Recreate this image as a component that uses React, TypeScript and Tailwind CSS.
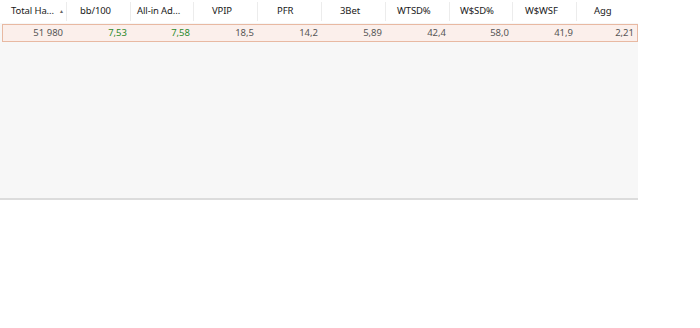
const columns = [
  { title: "Total Ha...", width: "w-[67px]", pad: "pl-[11px]", value: "51 980", sort: true },
  { title: "bb/100", width: "w-[64px]", pad: "pl-[13px]", value: "7,53", green: true },
  { title: "All-in Ad...", width: "w-[63px]", pad: "pl-[6px]", value: "7,58", green: true },
  { title: "VPIP", width: "w-[64px]", pad: "pl-[18px]", value: "18,5" },
  { title: "PFR", width: "w-[64px]", pad: "pl-[19px]", value: "14,2" },
  { title: "3Bet", width: "w-[64px]", pad: "pl-[18px]", value: "5,89" },
  { title: "WTSD%", width: "w-[64px]", pad: "pl-[11px]", value: "42,4" },
  { title: "W$SD%", width: "w-[63px]", pad: "pl-[10px]", value: "58,0" },
  { title: "W$WSF", width: "w-[64px]", pad: "pl-[12px]", value: "41,9" },
  { title: "Agg", width: "w-[61px]", pad: "pl-[17px]", value: "2,21" },
];

const App = () => {
  return (
    <div
      className="w-[700px] h-[328px] bg-white text-[9.5px] text-[#1a1a1a]"
      style={{ fontFamily: '"Noto Sans", "Open Sans", sans-serif' }}
    >
      <div className="w-[638px] flex flex-col">
        <div className="h-[23px] flex items-center bg-white">
          {columns.map((col, i) => (
            <div
              key={col.title}
              className={`${col.width} ${col.pad} h-[19px] shrink-0 whitespace-nowrap flex items-center gap-[5px] ${
                i < columns.length - 1 ? "border-r border-[#ececec]" : ""
              }`}
            >
              <span className="tracking-[-0.1px]">{col.title}</span>
              {col.sort && <span className="text-[5px] text-[#666]">▲</span>}
            </div>
          ))}
        </div>
        <div className="h-[177px] bg-[#f7f7f7] pt-[1px] pl-[2px] border-b-[2px] border-[#dcdcdc]">
          <div className="h-[18px] flex bg-[#fbefeb] border border-[#e8b9a2]">
            {columns.map((col, i) => (
              <div
                key={col.title}
                className={`${i === 0 ? "w-[64px]" : col.width} shrink-0 flex items-center justify-end pr-[4px] ${
                  col.green ? "text-[#2a8a2a]" : "text-[#555]"
                }`}
              >
                {col.value}
              </div>
            ))}
          </div>
        </div>
      </div>
    </div>
  );
};

export default App;
